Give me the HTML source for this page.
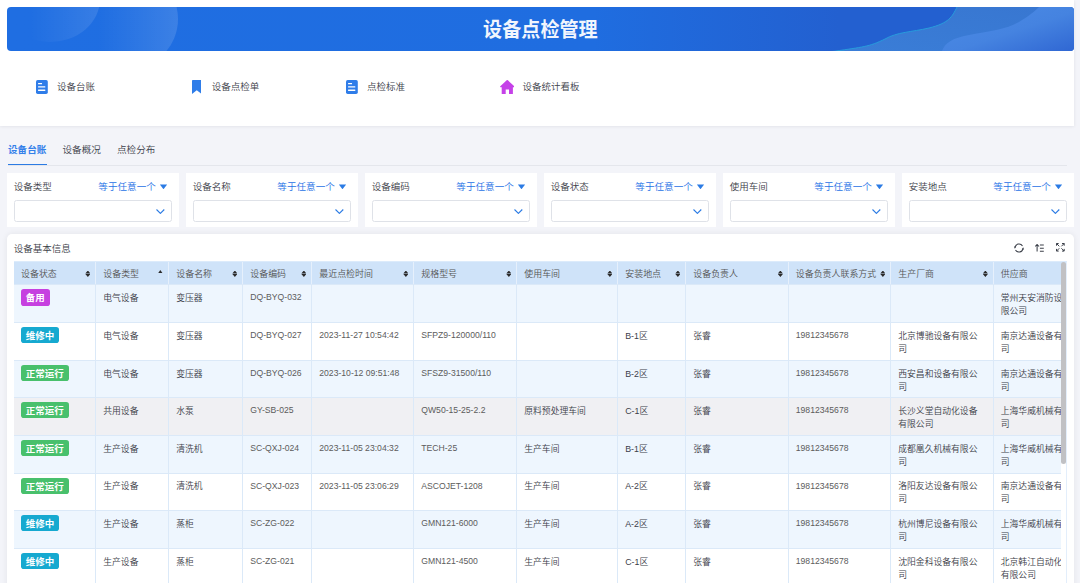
<!DOCTYPE html>
<html lang="zh-CN">
<head>
<meta charset="utf-8">
<title>设备点检管理</title>
<style>
*{box-sizing:border-box;margin:0;padding:0}
html,body{width:1080px;height:583px;overflow:hidden}
body{background:#f3f4f9;font-family:"Liberation Sans","Noto Sans CJK SC",sans-serif;font-weight:350;color:#3c4049;position:relative;font-size:8.75px}
.top{position:absolute;left:0;top:0;width:1073.8px;height:126.1px;background:#fff;box-shadow:0 .5px 3.5px rgba(0,0,30,.09)}
.banner{position:absolute;left:7px;top:7px;width:1066.8px;height:44.3px;border-radius:4px;overflow:hidden;background:linear-gradient(90deg,#1f6ee2 0%,#1f6de0 55%,#2360d0 78%,#2360d0 100%)}
.banner svg{position:absolute;left:0;top:0}
.banner h1{position:absolute;left:0;top:2.1px;width:100%;height:44px;line-height:43px;text-align:center;color:#f1f5fd;font-size:19.1px;font-weight:700;letter-spacing:0;transform:scaleY(1.05);transform-origin:50% 50%}
.nav{position:absolute;left:7px;top:72px;height:29px}
.nav .it{position:absolute;top:0;height:29px;width:155px;white-space:nowrap}
.nav .it svg{position:absolute;top:7.5px}
.nav .it span{position:absolute;top:0;line-height:29px;font-size:9.5px;color:#3c4049}
.tabs{position:absolute;left:8px;top:136px;width:1059px;height:29.6px;border-bottom:.8px solid #e4e6ec}
.tabs span{position:absolute;top:0;line-height:28px;font-size:9.6px;color:#3c4049;white-space:nowrap}
.tabs span.on{color:#3380ea;font-weight:700}
.tabs i{position:absolute;left:0;bottom:-.6px;width:38.5px;height:1.4px;background:#2b7be4}
.flt{position:absolute;top:172.75px;width:172px;height:54px;background:#fff}
.flt .lb{position:absolute;left:7px;top:6px;line-height:15px;font-size:9.5px;color:#3c4049}
.flt .op{position:absolute;right:22.9px;top:6px;line-height:15px;font-size:9.6px;color:#1f72e6}
.flt .tri{position:absolute;left:153.1px;top:11.7px;width:7.3px;height:4.7px;background:#2b7be4;clip-path:polygon(0 0,100% 0,50% 100%)}
.flt .sel{position:absolute;left:7.25px;top:27.25px;width:158px;height:22px;border:1px solid #dfe2e8;border-radius:2.5px;background:#fff}
.flt .sel svg{position:absolute;right:6.2px;top:8.3px}
.card{position:absolute;left:6.75px;top:234px;width:1067px;height:360px;background:#fff;border-radius:5px;box-shadow:0 0 6px rgba(0,0,30,.07)}
.card .ttl{position:absolute;left:7px;top:7px;line-height:15px;font-size:9.5px;color:#3c4049}
.card .tools svg{position:absolute}
.hx{position:absolute;left:1054px;top:28px;width:5.8px;height:22.4px;background:#cfe3f9}
.tx{position:absolute;left:7px;top:27.2px;width:1053px;height:1px;background:#dcebfb}
.vx{position:absolute;left:1059.4px;top:28px;width:.7px;height:330px;background:#e3eefb}
.tw{position:absolute;left:7px;top:28px;width:1047.1px;height:330px;overflow:hidden}
.tb{width:1082.25px}
.r{display:grid;grid-template-columns:82.25px 73px 74px 69px 102px 103px 101px 68px 102.5px 102.5px 102.5px 102.5px;height:37.64px}
.r.hd{height:22.4px}
.r.hd>div{background:#cfe3f9;border-right:1px solid #e6f0fc;border-top:0;font-size:8.95px;color:#555;padding:0 0 0 7.25px;position:relative;white-space:nowrap;line-height:24.6px;height:22.4px;overflow:hidden}
.r>div{padding:6.9px 8.5px 0 7.25px;line-height:13px;font-size:8.8px;color:#3c4049;border-right:1px solid #dbe9f8;border-top:1px solid #dbe9f8;background:#fff;word-break:break-all;overflow:hidden}
.r>div.l{color:#5c5c5c;font-size:8.65px;padding-top:6px}
.r.a>div{background:#eef6fe}
.r.h>div{background:#f0f0f3}
.hd .s{position:absolute;right:4.6px;top:8.5px;width:5.1px;height:6.5px;background:#2b2b2b;clip-path:polygon(50% 0,100% 45%,0 45%,50% 0,50% 100%,0 55%,100% 55%,50% 100%)}
.hd .u{position:absolute;right:5.3px;top:8.1px;width:4.8px;height:3.4px;background:#2b2b2b;clip-path:polygon(50% 0,100% 100%,0 100%)}
.bd{display:block;width:max-content;height:16.2px;line-height:17.2px;padding:0 4.75px;border-radius:2.8px;color:#fff;font-weight:700;font-size:9.5px;margin-top:-2.9px;white-space:nowrap}
.bd.p{background:#c640e0}.bd.c{background:#16a9d0}.bd.g{background:#48c06c}
.sb{position:absolute;left:1054.1px;top:28px;width:5.15px;height:202.4px;background:#c1c1c4;border-radius:2.6px}
</style>
</head>
<body>
<div class="top">
  <div class="banner">
    <svg width="1067" height="44" viewBox="0 0 1067 44">
      <defs>
        <linearGradient id="g1" x1="0" y1="0" x2="1" y2="0"><stop offset="0.3" stop-color="#fff" stop-opacity="0"/><stop offset="1" stop-color="#fff" stop-opacity=".11"/></linearGradient>
        <linearGradient id="g2" x1="0" y1="0" x2="1" y2="0"><stop offset="0.2" stop-color="#fff" stop-opacity="0"/><stop offset="1" stop-color="#fff" stop-opacity=".13"/></linearGradient>
        <linearGradient id="w1" x1="0" y1="1" x2="1" y2="0"><stop offset="0" stop-color="#3a7ed8"/><stop offset="1" stop-color="#3876d0"/></linearGradient>
        <linearGradient id="w2" x1="0" y1="0" x2="1" y2="1"><stop offset="0" stop-color="#4c8ce6"/><stop offset=".55" stop-color="#4583e0"/><stop offset="1" stop-color="#3067d3"/></linearGradient>
      </defs>
      <ellipse cx="43" cy="-8" rx="50" ry="43" fill="url(#g1)"/>
      <circle cx="121" cy="12" r="50" fill="url(#g2)"/>
      <path d="M800 47 L828 44.2 C 855 40, 862 40, 878 32 C 890 25, 905 25, 922 21 C 942 16, 945 10, 950 0 L 951 -3 L 1072 -3 L 1072 47 Z" fill="url(#w1)" stroke="#27a0dc" stroke-width="0.9"/>
      <path d="M935 44 C 938 36, 945 31, 962 28 C 985 24, 1000 22, 1012 15 C 1022 9, 1028 4, 1032 0 L 1067 0 L 1067 44 Z" fill="url(#w2)"/>
    </svg>
    <h1>设备点检管理</h1>
  </div>
  <div class="nav">
    <div class="it" style="left:0">
      <svg style="left:28.9px;top:7.8px" width="11.8" height="14" viewBox="0 0 11.8 14"><rect x="0" y="0" width="11.8" height="13.9" rx="1.7" fill="#2f7de9"/><rect x="2.05" y="3.05" width="4" height="1.3" rx=".3" fill="#fff"/><rect x="2.05" y="6.3" width="7.25" height="1.3" rx=".3" fill="#fff"/><rect x="2.05" y="9.5" width="7.25" height="1.5" rx=".3" fill="#fff"/></svg>
      <span style="left:50px">设备台账</span>
    </div>
    <div class="it" style="left:155px">
      <svg style="left:29.9px;top:7.8px" width="9.5" height="14" viewBox="0 0 9.5 14"><path d="M.8 0 H8.7 Q9.5 0 9.5 .8 V14 L4.75 10.2 L0 14 V.8 Q0 0 .8 0Z" fill="#2f7de9"/></svg>
      <span style="left:49.75px">设备点检单</span>
    </div>
    <div class="it" style="left:310px">
      <svg style="left:29.1px;top:7.8px" width="11.8" height="14" viewBox="0 0 11.8 14"><rect x="0" y="0" width="11.8" height="13.9" rx="1.7" fill="#2f7de9"/><rect x="2.05" y="3.05" width="4" height="1.3" rx=".3" fill="#fff"/><rect x="2.05" y="6.3" width="7.25" height="1.3" rx=".3" fill="#fff"/><rect x="2.05" y="9.5" width="7.25" height="1.5" rx=".3" fill="#fff"/></svg>
      <span style="left:50px">点检标准</span>
    </div>
    <div class="it" style="left:465px">
      <svg style="left:27.7px" width="14.6" height="14.5" viewBox="0 0 14.6 14.5"><path d="M6.7 .35 Q7.3 -.15 7.9 .35 L14.3 6.2 Q14.8 6.8 14.1 7.3 H12.9 V14.5 H9 V9.4 H5.7 V14.5 H1.7 V7.3 H.5 Q-.2 6.8 .3 6.2 Z" fill="#c541e8"/></svg>
      <span style="left:50.4px">设备统计看板</span>
    </div>
  </div>
</div>

<div class="tabs">
  <span class="on" style="left:0">设备台账</span>
  <span style="left:54.5px">设备概况</span>
  <span style="left:109px">点检分布</span>
  <i></i>
</div>

<div class="flt" style="left:6.75px"><div class="lb">设备类型</div><div class="op">等于任意一个</div><div class="tri"></div><div class="sel"><svg width="8.8" height="5.2" viewBox="0 0 8.8 5.2"><path d="M.5 .5 L4.4 4.4 L8.3 .5" fill="none" stroke="#2b7be4" stroke-width="1.1"/></svg></div></div>
<div class="flt" style="left:185.75px"><div class="lb">设备名称</div><div class="op">等于任意一个</div><div class="tri"></div><div class="sel"><svg width="8.8" height="5.2" viewBox="0 0 8.8 5.2"><path d="M.5 .5 L4.4 4.4 L8.3 .5" fill="none" stroke="#2b7be4" stroke-width="1.1"/></svg></div></div>
<div class="flt" style="left:364.75px"><div class="lb">设备编码</div><div class="op">等于任意一个</div><div class="tri"></div><div class="sel"><svg width="8.8" height="5.2" viewBox="0 0 8.8 5.2"><path d="M.5 .5 L4.4 4.4 L8.3 .5" fill="none" stroke="#2b7be4" stroke-width="1.1"/></svg></div></div>
<div class="flt" style="left:543.75px"><div class="lb">设备状态</div><div class="op">等于任意一个</div><div class="tri"></div><div class="sel"><svg width="8.8" height="5.2" viewBox="0 0 8.8 5.2"><path d="M.5 .5 L4.4 4.4 L8.3 .5" fill="none" stroke="#2b7be4" stroke-width="1.1"/></svg></div></div>
<div class="flt" style="left:722.75px"><div class="lb">使用车间</div><div class="op">等于任意一个</div><div class="tri"></div><div class="sel"><svg width="8.8" height="5.2" viewBox="0 0 8.8 5.2"><path d="M.5 .5 L4.4 4.4 L8.3 .5" fill="none" stroke="#2b7be4" stroke-width="1.1"/></svg></div></div>
<div class="flt" style="left:901.75px"><div class="lb">安装地点</div><div class="op">等于任意一个</div><div class="tri"></div><div class="sel"><svg width="8.8" height="5.2" viewBox="0 0 8.8 5.2"><path d="M.5 .5 L4.4 4.4 L8.3 .5" fill="none" stroke="#2b7be4" stroke-width="1.1"/></svg></div></div>

<div class="card">
  <div class="ttl">设备基本信息</div>
  <div class="tools">
    <svg style="left:1007.45px;top:8.6px" width="10" height="10" viewBox="0 0 10 10"><path d="M1.05 4.2 A4.05 4.05 0 0 1 8.5 3 M8.95 5.8 A4.05 4.05 0 0 1 1.5 7" fill="none" stroke="#3c404a" stroke-width="1.05"/><path d="M-.1 3.5 L2.2 3.8 L.8 5.7 Z M10.1 6.5 L7.8 6.2 L9.2 4.3 Z" fill="#3c404a"/></svg>
    <svg style="left:1028.5px;top:9.5px" width="9" height="8" viewBox="0 0 9 8"><path d="M2.1 7.6 V.6 M.2 2.5 L2.1 .5 L4 2.5 M4.9 1 H8.8 M4.9 4.2 H8.8 M4.9 7.2 H8.8" fill="none" stroke="#3c404a" stroke-width="1.05"/></svg>
    <svg style="left:1049.25px;top:9.3px" width="8.7" height="8.6" viewBox="0 0 8.7 8.6"><path d="M.5 2.7 V.5 H2.7 M.6 .6 L3.3 3.3 M6 .5 H8.2 V2.7 M8.1 .6 L5.4 3.3 M.5 5.9 V8.1 H2.7 M.6 8 L3.3 5.3 M8.2 5.9 V8.1 H6 M8.1 8 L5.4 5.3" fill="none" stroke="#3c404a" stroke-width="1"/></svg>
  </div>
  <div class="hx"></div><div class="tx"></div>
  <div class="tw">
  <div class="tb">
        <div class="r hd">
      <div>设备状态<b class="s"></b></div><div>设备类型<b class="u"></b></div><div>设备名称<b class="s"></b></div><div>设备编码<b class="s"></b></div><div>最近点检时间<b class="s"></b></div><div>规格型号<b class="s"></b></div><div>使用车间<b class="s"></b></div><div>安装地点<b class="s"></b></div><div>设备负责人<b class="s"></b></div><div>设备负责人联系方式<b class="s"></b></div><div>生产厂商<b class="s"></b></div><div>供应商</div>
    </div>
    
      <div class="r a"><div><span class="bd p">备用</span></div><div>电气设备</div><div>变压器</div><div class="l">DQ-BYQ-032</div><div></div><div></div><div></div><div></div><div></div><div></div><div></div><div>常州天安消防设备有限公司</div></div>
      <div class="r"><div><span class="bd c">维修中</span></div><div>电气设备</div><div>变压器</div><div class="l">DQ-BYQ-027</div><div class="l">2023-11-27 10:54:42</div><div class="l">SFPZ9-120000/110</div><div></div><div>B-1区</div><div>张睿</div><div class="l">19812345678</div><div>北京博驰设备有限公司</div><div>南京达通设备有限公司</div></div>
      <div class="r a"><div><span class="bd g">正常运行</span></div><div>电气设备</div><div>变压器</div><div class="l">DQ-BYQ-026</div><div class="l">2023-10-12 09:51:48</div><div class="l">SFSZ9-31500/110</div><div></div><div>B-2区</div><div>张睿</div><div class="l">19812345678</div><div>西安昌和设备有限公司</div><div>南京达通设备有限公司</div></div>
      <div class="r h"><div><span class="bd g">正常运行</span></div><div>共用设备</div><div>水泵</div><div class="l">GY-SB-025</div><div></div><div class="l">QW50-15-25-2.2</div><div>原料预处理车间</div><div>C-1区</div><div>张睿</div><div class="l">19812345678</div><div>长沙义堂自动化设备有限公司</div><div>上海华威机械有限公司</div></div>
      <div class="r a"><div><span class="bd g">正常运行</span></div><div>生产设备</div><div>清洗机</div><div class="l">SC-QXJ-024</div><div class="l">2023-11-05 23:04:32</div><div class="l">TECH-25</div><div>生产车间</div><div>B-1区</div><div>张睿</div><div class="l">19812345678</div><div>成都凰久机械有限公司</div><div>上海华威机械有限公司</div></div>
      <div class="r"><div><span class="bd g">正常运行</span></div><div>生产设备</div><div>清洗机</div><div class="l">SC-QXJ-023</div><div class="l">2023-11-05 23:06:29</div><div class="l">ASCOJET-1208</div><div>生产车间</div><div>A-2区</div><div>张睿</div><div class="l">19812345678</div><div>洛阳友达设备有限公司</div><div>南京达通设备有限公司</div></div>
      <div class="r a"><div><span class="bd c">维修中</span></div><div>生产设备</div><div>蒸柜</div><div class="l">SC-ZG-022</div><div></div><div class="l">GMN121-6000</div><div>生产车间</div><div>A-2区</div><div>张睿</div><div class="l">19812345678</div><div>杭州博尼设备有限公司</div><div>上海华威机械有限公司</div></div>
      <div class="r"><div><span class="bd c">维修中</span></div><div>生产设备</div><div>蒸柜</div><div class="l">SC-ZG-021</div><div></div><div class="l">GMN121-4500</div><div>生产车间</div><div>C-1区</div><div>张睿</div><div class="l">19812345678</div><div>沈阳金科设备有限公司</div><div>北京韩江自动化设备有限公司</div></div>
      <div class="r a"><div><span class="bd g">正常运行</span></div><div>生产设备</div><div>蒸柜</div><div class="l">SC-ZG-020</div><div></div><div class="l">GMN121-3000</div><div>生产车间</div><div>C-1区</div><div>张睿</div><div class="l">19812345678</div><div>沈阳金科设备有限公司</div><div>北京韩江自动化设备有限公司</div></div>
    
  </div>
  </div>
  <div class="vx"></div>
  <div class="sb"></div>
</div>
</body>
</html>
